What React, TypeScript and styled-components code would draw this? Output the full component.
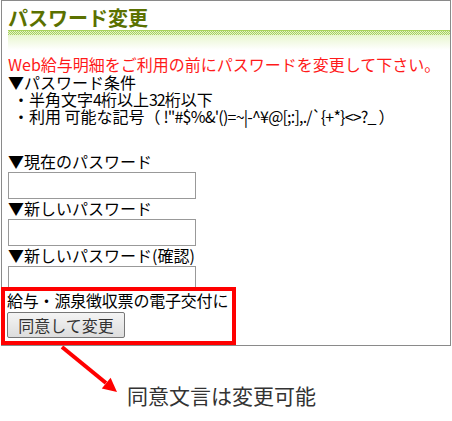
import React from "react";
import styled, { createGlobalStyle } from "styled-components";

const GlobalStyle = createGlobalStyle`
  html, body { margin: 0; padding: 0; background: #fff; }
  body { font-family: "Noto Sans CJK JP", "Noto Sans", sans-serif; color: #000; }
`;

const Page = styled.div`
  position: relative;
  width: 452px;
  height: 421px;
  overflow: hidden;
`;

const Panel = styled.div`
  box-sizing: border-box;
  margin-left: 1px;
  width: 450px;
  border: 1px solid #8a8a8a;
  padding: 5px 0 0 6px;
  display: flex;
  flex-direction: column;
`;

const Title = styled.h1`
  margin: 0;
  font-size: 20px;
  line-height: 24px;
  font-weight: bold;
  color: #5b7100;
`;

const Checker = styled.div`
  height: 4px;
  border-top: 1px solid #a9d35c;
  background: conic-gradient(#a6d060 25%, #e4f3c8 0 50%, #a6d060 0 75%, #e4f3c8 0) 0 0 / 2px 2px;
`;

const Fade = styled.div`
  height: 15px;
  background: linear-gradient(#e8f6cf, #ffffff);
`;

const Notice = styled.p`
  margin: 5px 0 0;
  font-size: 16px;
  line-height: 19px;
  color: #ff1a1a;
  white-space: nowrap;
`;

const Line = styled.div<{ $indent?: number }>`
  font-size: 16px;
  line-height: 17px;
  white-space: nowrap;
  padding-left: ${(p) => p.$indent ?? 0}px;
`;

const Narrow = styled.span<{ $spacing?: number }>`
  letter-spacing: ${(p) => p.$spacing ?? -1}px;
`;

const Fields = styled.div`
  margin-top: 28px;
  display: flex;
  flex-direction: column;
`;

const Label = styled.label`
  font-size: 16px;
  line-height: 17px;
  white-space: nowrap;
  margin-top: 1px;
  &:first-child { margin-top: 0; }
`;

const Input = styled.input`
  box-sizing: border-box;
  margin: 2px 0 0;
  width: 188px;
  height: 27px;
  border: 1px solid #999;
  background: #fff;
  padding: 0 4px;
`;

const Consent = styled.div`
  box-sizing: border-box;
  position: relative;
  margin: -6px 0 0 -7px;
  width: 235px;
  height: 58px;
  border: 4px solid #ff0000;
  background: #fff;
  padding: 1px 0 0 2px;
  display: flex;
  flex-direction: column;
  align-items: flex-start;
`;

const ConsentText = styled.div`
  font-size: 16px;
  line-height: 17px;
  white-space: nowrap;
  letter-spacing: -0.2px;
`;

const Button = styled.button`
  box-sizing: border-box;
  margin-top: 3px;
  width: 118px;
  height: 26px;
  border: 1px solid #777;
  border-radius: 2px;
  background: linear-gradient(#f4f4f4, #dddddd);
  font-family: "Noto Sans CJK JP", sans-serif;
  font-size: 16px;
  line-height: 22px;
  color: #333;
  padding: 0;
`;

const Caption = styled.div`
  margin: 35px 0 0 127px;
  font-size: 21px;
  line-height: 28px;
  color: #333;
  white-space: nowrap;
`;

const Arrow = styled.svg`
  position: absolute;
  left: 0;
  top: 0;
  pointer-events: none;
`;

export default function App() {
  return (
    <Page>
      <GlobalStyle />
      <Panel>
        <Title>パスワード変更</Title>
        <Checker />
        <Fade />
        <Notice>Web給与明細をご利用の前にパスワードを変更して下さい。</Notice>
        <Line>▼パスワード条件</Line>
        <Line $indent={5}>
          ・半角文字<Narrow>4</Narrow>桁以上<Narrow>32</Narrow>桁以下
        </Line>
        <Line $indent={5}>
          ・利用 可能な記号（<Narrow $spacing={-0.8}> !"#$%&amp;'()=~|-^¥@[;:],./`{"{"}+*{"}"}&lt;&gt;?_ </Narrow>）
        </Line>
        <Fields>
          <Label>▼現在のパスワード</Label>
          <Input type="password" />
          <Label>▼新しいパスワード</Label>
          <Input type="password" />
          <Label>▼新しいパスワード(確認)</Label>
          <Input type="password" />
        </Fields>
        <Consent>
          <ConsentText>給与・源泉徴収票の電子交付に</ConsentText>
          <Button type="button">同意して変更</Button>
        </Consent>
      </Panel>
      <Caption>同意文言は変更可能</Caption>
      <Arrow width="452" height="421" viewBox="0 0 452 421">
        <line x1="62" y1="347" x2="106" y2="383" stroke="#ff0000" strokeWidth="4" />
        <polygon points="117,392 101.8,388.5 110.6,377.7" fill="#ff0000" />
      </Arrow>
    </Page>
  );
}
